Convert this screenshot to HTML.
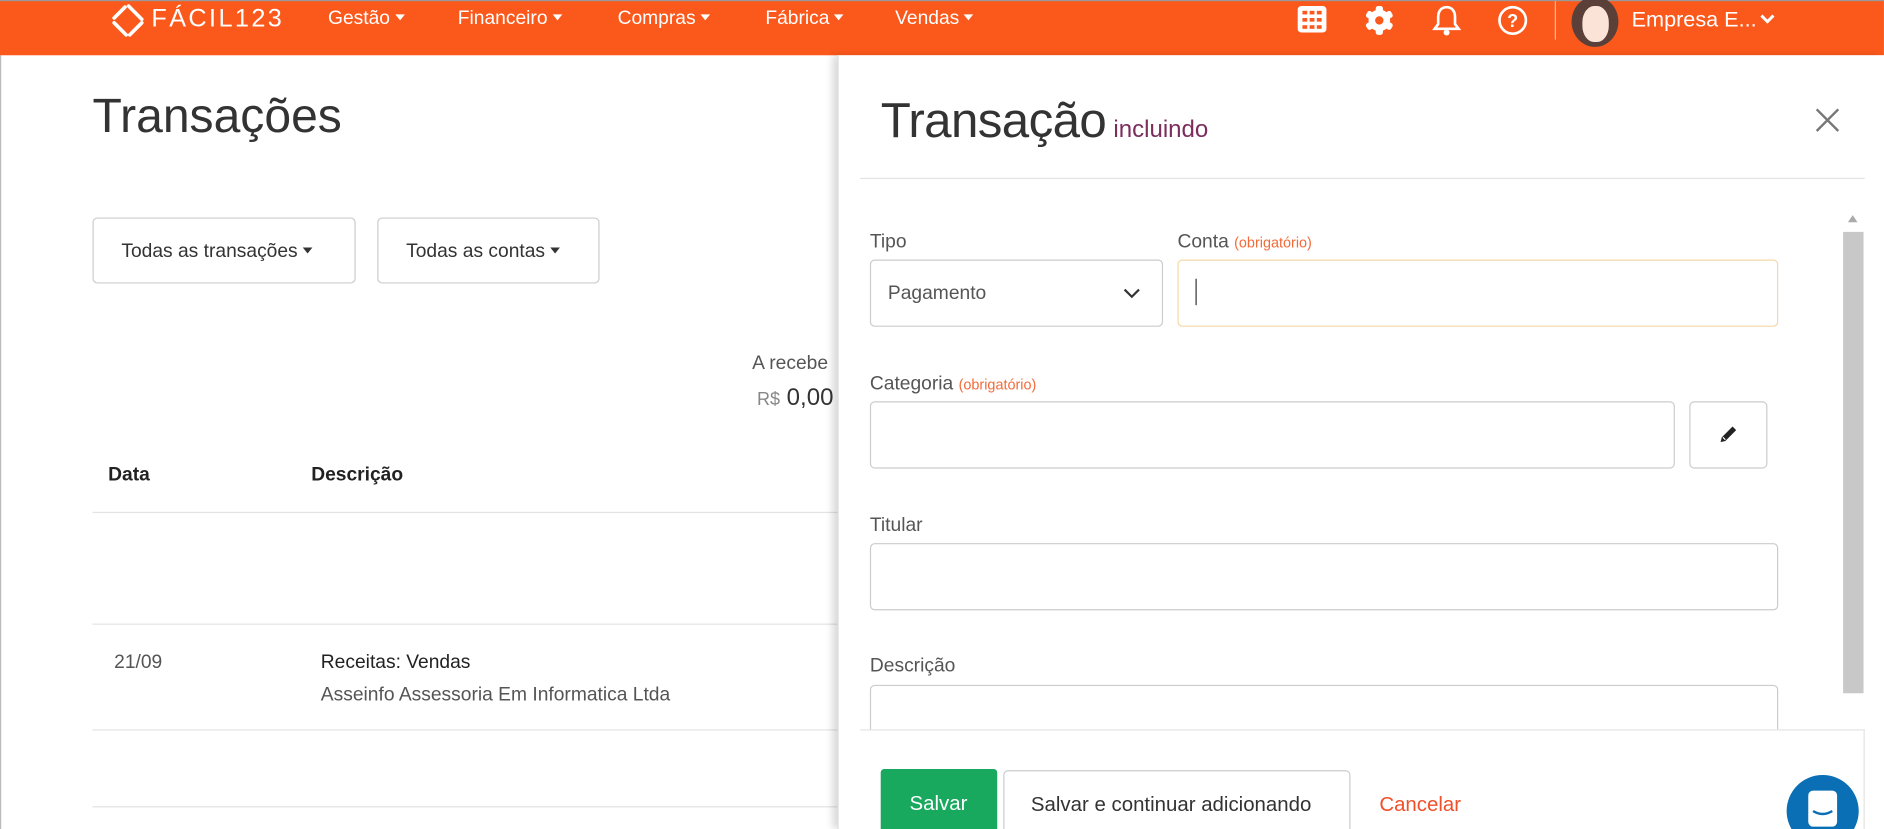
<!DOCTYPE html>
<html><head><meta charset="utf-8"><style>
*{box-sizing:border-box;margin:0;padding:0}
html,body{width:1884px;height:829px;overflow:hidden;background:#fff;font-family:"Liberation Sans",sans-serif}
#w{position:absolute;left:0;top:0;width:1568px;height:690px;transform:scale(1.2015);transform-origin:0 0;overflow:hidden;background:#fff}
.a{position:absolute;white-space:nowrap}
.hdr{left:0;top:0;width:1568px;height:46px;background:#fb581b;border-top:1px solid #999}
.nav{color:#fff;font-size:16px;top:6px}
.car{display:inline-block;border-left:4px solid transparent;border-right:4px solid transparent;border-top:5px solid #fff;vertical-align:3px;margin-left:4px}
.box{border:1px solid #ccc;border-radius:4px;background:#fff}
.lbl{font-size:16px;color:#555}
.req{font-size:12px;color:#f26b3a}
.line{height:1px;background:#e3e3e3}
</style></head><body><div id="w">
<div class="a" style="left:0;top:46px;width:1px;height:644px;background:#bbb"></div>
<div class="a hdr">
 <svg class="a" style="left:92px;top:1px" width="30" height="30" viewBox="0 0 30 30"><path d="M15 3 L26 14 M26 17 L16 27 M13 27 L3 17 M3 13 L12 4" stroke="#fff" stroke-width="3" stroke-linecap="round" fill="none"/></svg>
 <div class="a" style="left:126px;top:3px;color:#fff;font-size:21px;letter-spacing:2px">FÁCIL123</div>
 <div class="a nav" style="left:273px">Gestão<span class="car"></span></div>
 <div class="a nav" style="left:381px">Financeiro<span class="car"></span></div>
 <div class="a nav" style="left:514px">Compras<span class="car"></span></div>
 <div class="a nav" style="left:637px">Fábrica<span class="car"></span></div>
 <div class="a nav" style="left:745px">Vendas<span class="car"></span></div>
 <svg class="a" style="left:1080px;top:4px" width="24" height="22" viewBox="0 0 24 22"><rect x="0" y="0" width="24" height="22" rx="3" fill="#fff"/><g fill="#fb581b"><rect x="4" y="4" width="4" height="3"/><rect x="10" y="4" width="4" height="3"/><rect x="16" y="4" width="4" height="3"/><rect x="4" y="10" width="4" height="3"/><rect x="10" y="10" width="4" height="3"/><rect x="16" y="10" width="4" height="3"/><rect x="4" y="16" width="4" height="3"/><rect x="10" y="16" width="4" height="3"/><rect x="16" y="16" width="4" height="3"/></g></svg>
 <svg class="a" style="left:1135px;top:3px" width="26" height="26" viewBox="0 0 26 26"><g fill="#fff"><circle cx="13" cy="13" r="9"/><rect x="10" y="1" width="6" height="24" rx="2"/><rect x="10" y="1" width="6" height="24" rx="2" transform="rotate(60 13 13)"/><rect x="10" y="1" width="6" height="24" rx="2" transform="rotate(120 13 13)"/></g><circle cx="13" cy="13" r="3.5" fill="#fb581b"/></svg>
 <svg class="a" style="left:1192px;top:3px" width="24" height="26" viewBox="0 0 24 26"><path d="M12 2 C7 2 5 6 5 10 L5 16 L2 20 L22 20 L19 16 L19 10 C19 6 17 2 12 2Z" fill="none" stroke="#fff" stroke-width="2.2"/><circle cx="12" cy="23" r="2.5" fill="#fff"/></svg>
 <svg class="a" style="left:1246px;top:3px" width="26" height="26" viewBox="0 0 26 26"><circle cx="13" cy="13" r="11" fill="none" stroke="#fff" stroke-width="2.2"/><text x="13" y="18.5" font-size="15" font-weight="bold" text-anchor="middle" fill="#fff" font-family="Liberation Sans">?</text></svg>
 <div class="a" style="left:1294px;top:0;width:1px;height:32px;background:#fdb59a"></div>
 <div class="a" style="left:1308px;top:-4px;width:39px;height:42px;border-radius:50%;background:#5a4038;overflow:hidden"><div class="a" style="left:9px;top:8px;width:22px;height:30px;border-radius:45%;background:#fbe3d8"></div></div>
 <div class="a" style="left:1358px;top:5px;color:#fff;font-size:18px">Empresa E...</div>
 <svg class="a" style="left:1464px;top:10px" width="14" height="10" viewBox="0 0 14 10"><path d="M2 2 L7 7 L12 2" stroke="#fff" stroke-width="2.5" fill="none"/></svg>
</div>

<div class="a" style="left:77px;top:75px;font-size:40px;color:#333">Transações</div>
<div class="a box" style="left:77px;top:181px;width:219px;height:55px;font-size:16px;color:#333;padding:19px 0 0 23px">Todas as transações<span class="car" style="border-top-color:#333"></span></div>
<div class="a box" style="left:314px;top:181px;width:185px;height:55px;font-size:16px;color:#333;padding:19px 0 0 23px">Todas as contas<span class="car" style="border-top-color:#333"></span></div>
<div class="a" style="left:626px;top:294px;font-size:16px;color:#555">A recebe</div>
<div class="a" style="left:630px;top:320px;font-size:20px;color:#333"><span style="font-size:15px;color:#888">R$</span> 0,00</div>
<div class="a" style="left:90px;top:387px;font-size:16px;font-weight:bold;color:#222">Data</div>
<div class="a" style="left:259px;top:387px;font-size:16px;font-weight:bold;color:#222">Descrição</div>
<div class="a line" style="left:77px;top:426px;width:620px"></div>
<div class="a line" style="left:77px;top:519px;width:620px"></div>
<div class="a line" style="left:77px;top:607px;width:620px"></div>
<div class="a line" style="left:77px;top:671px;width:620px"></div>
<div class="a" style="left:95px;top:543px;font-size:16px;color:#555">21/09</div>
<div class="a" style="left:267px;top:543px;font-size:16px;color:#222">Receitas: Vendas</div>
<div class="a" style="left:267px;top:570px;font-size:16px;color:#555">Asseinfo Assessoria Em Informatica Ltda</div>

<div class="a" style="left:697px;top:46px;width:871px;height:644px;background:#fff;box-shadow:-4px 0 6px rgba(0,0,0,.15);border-left:1px solid #ddd"></div>
<div class="a" style="left:733px;top:77px;font-size:41px;color:#333;letter-spacing:-0.5px">Transação<span style="font-size:20px;color:#7b2d5c;margin-left:6px;letter-spacing:0">incluindo</span></div>
<svg class="a" style="left:1510px;top:89px" width="22" height="22" viewBox="0 0 22 22"><path d="M2 2 L20 20 M20 2 L2 20" stroke="#777" stroke-width="2"/></svg>
<div class="a line" style="left:716px;top:148px;width:836px"></div>
<div class="a" style="left:1538px;top:179px;border-left:4px solid transparent;border-right:4px solid transparent;border-bottom:6px solid #aaa"></div>
<div class="a" style="left:1534px;top:193px;width:17px;height:384px;background:#c8c8c8"></div>

<div class="a lbl" style="left:724px;top:193px">Tipo</div>
<div class="a box" style="left:724px;top:216px;width:244px;height:56px;font-size:16px;color:#555;padding:19px 0 0 14px">Pagamento</div>
<svg class="a" style="left:935px;top:239px" width="14" height="10" viewBox="0 0 14 10"><path d="M1 2 L7 8 L13 2" stroke="#333" stroke-width="1.8" fill="none"/></svg>
<div class="a lbl" style="left:980px;top:193px">Conta <span class="req">(obrigatório)</span></div>
<div class="a box" style="left:980px;top:216px;width:500px;height:56px;border-color:#f5d8a8"></div>
<div class="a" style="left:995px;top:232px;width:1px;height:22px;background:#333"></div>

<div class="a lbl" style="left:724px;top:311px">Categoria <span class="req">(obrigatório)</span></div>
<div class="a box" style="left:724px;top:334px;width:670px;height:56px"></div>
<div class="a box" style="left:1406px;top:334px;width:65px;height:56px"></div>
<svg class="a" style="left:1430px;top:352px" width="18" height="18" viewBox="0 0 18 18"><path d="M2 16 L3 12 L12 3 L15 6 L6 15 Z" fill="#222"/><path d="M4 12 L6 14" stroke="#fff" stroke-width="1"/></svg>

<div class="a lbl" style="left:724px;top:429px">Titular</div>
<div class="a box" style="left:724px;top:452px;width:756px;height:56px"></div>
<div class="a lbl" style="left:724px;top:546px">Descrição</div>
<div class="a box" style="left:724px;top:570px;width:756px;height:56px"></div>

<div class="a" style="left:716px;top:607px;width:836px;height:83px;background:#fff;border-top:1px solid #e3e3e3;border-right:1px solid #e3e3e3"></div>
<div class="a" style="left:733px;top:640px;width:97px;height:55px;background:#18a95e;border-radius:3px;color:#fff;font-size:17px;padding:19px 0 0 24px">Salvar</div>
<div class="a box" style="left:835px;top:641px;width:289px;height:55px;font-size:17px;color:#333;padding:18px 0 0 22px">Salvar e continuar adicionando</div>
<div class="a" style="left:1148px;top:660px;font-size:17px;color:#f0502a">Cancelar</div>
<div class="a" style="left:1487px;top:645px;width:60px;height:60px;border-radius:50%;background:#0a6fb4"></div>
<div class="a" style="left:1505px;top:658px;width:24px;height:30px;border-radius:4px;background:#fff"></div>
<svg class="a" style="left:1507px;top:673px" width="20" height="8" viewBox="0 0 20 8"><path d="M2 2 Q10 7 18 2" stroke="#0a6fb4" stroke-width="2" fill="none"/></svg>
</div></body></html>
